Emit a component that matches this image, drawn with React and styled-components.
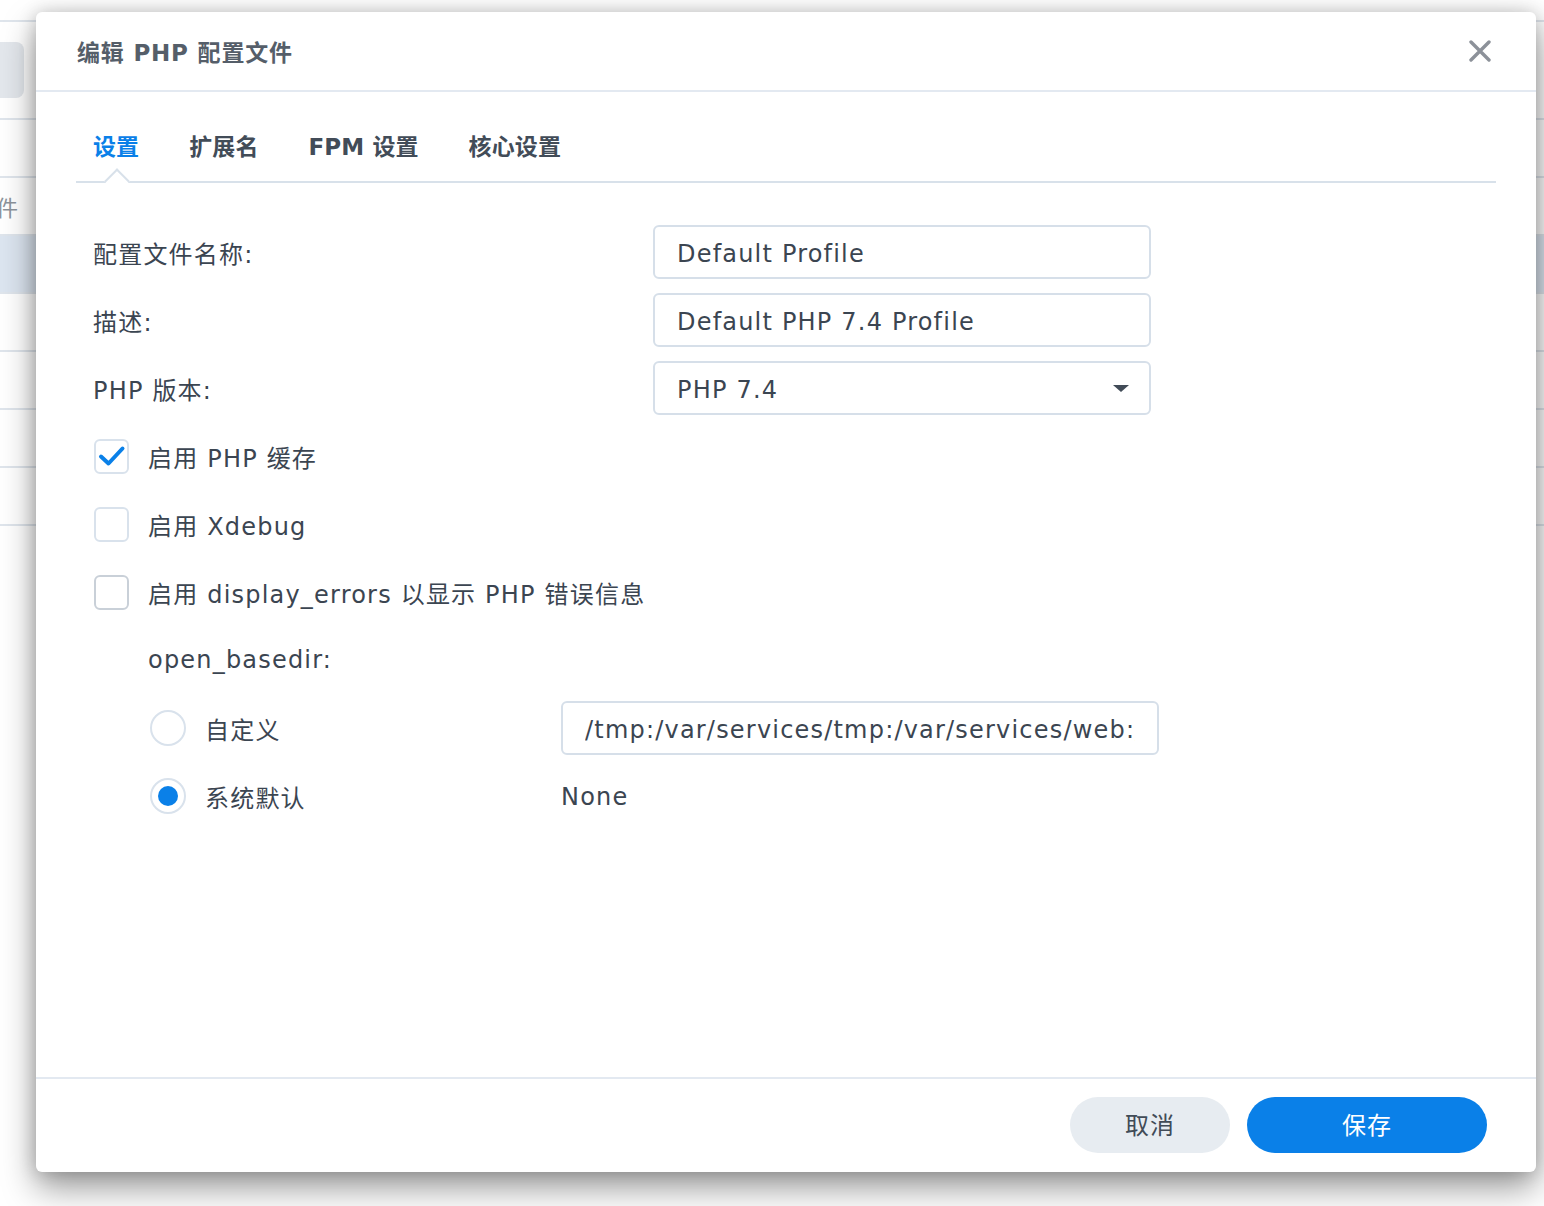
import React from "react";
import styled, { createGlobalStyle } from "styled-components";

const FONT = `"DejaVu Sans", "Noto Sans CJK SC", sans-serif`;

const GlobalStyle = createGlobalStyle`
  html, body {
    margin: 0;
    padding: 0;
    background: #ffffff;
  }
  body {
    font-family: ${FONT};
    color: #3b4551;
  }
`;

function App() {
  return (
    <Screen>
      <GlobalStyle />
      <Backdrop>
        <BackRow $h={22} />
        <BackRow $h={98}>
          <BackChip />
        </BackRow>
        <BackRow $h={58} />
        <BackRow $h={58}>
          <BackLabel>件</BackLabel>
        </BackRow>
        <BackRow $h={58} $active />
        <BackRow $h={58} />
        <BackRow $h={58} />
        <BackRow $h={58} />
        <BackRow $h={58} />
      </Backdrop>

      <Dialog>
        <Header>
          <Title>编辑 PHP 配置文件</Title>
          <Close>
            <svg width="22" height="22" viewBox="0 0 22 22">
              <path d="M2 2 L20 20 M20 2 L2 20" stroke="#8c9199" strokeWidth="3.4" strokeLinecap="round" />
            </svg>
          </Close>
        </Header>

        <Body>
          <TabBar>
            <Tab $active>设置<Notch /></Tab>
            <Tab>扩展名</Tab>
            <Tab>FPM 设置</Tab>
            <Tab>核心设置</Tab>
          </TabBar>

          <Form>
            <Row>
              <Label>配置文件名称:</Label>
              <Field>Default Profile</Field>
            </Row>
            <Row>
              <Label>描述:</Label>
              <Field>Default PHP 7.4 Profile</Field>
            </Row>
            <Row>
              <Label>PHP 版本:</Label>
              <Field>
                PHP 7.4
                <Caret />
              </Field>
            </Row>
            <Row>
              <Box $checked>
                <svg width="28" height="24" viewBox="0 0 28 24">
                  <path d="M3 12.5 L10.5 19.5 L24.5 4.5" fill="none" stroke="#0a80e8" strokeWidth="4" strokeLinecap="round" strokeLinejoin="round" />
                </svg>
              </Box>
              <OptionText>启用 PHP 缓存</OptionText>
            </Row>
            <Row>
              <Box />
              <OptionText>启用 Xdebug</OptionText>
            </Row>
            <Row>
              <Box $dark />
              <OptionText>启用 display_errors 以显示 PHP 错误信息</OptionText>
            </Row>
            <Row $indent={55}>
              <OptionText>open_basedir:</OptionText>
            </Row>
            <Row $indent={57}>
              <RadioCell>
                <Radio />
                <OptionText>自定义</OptionText>
              </RadioCell>
              <PathField>
                <Clip>/tmp:/var/services/tmp:/var/services/web:/var/services/homes</Clip>
              </PathField>
            </Row>
            <Row $indent={57}>
              <RadioCell>
                <Radio $checked />
                <OptionText>系统默认</OptionText>
              </RadioCell>
              <Value>None</Value>
            </Row>
          </Form>
        </Body>

        <Footer>
          <Button>取消</Button>
          <Button $primary>保存</Button>
        </Footer>
      </Dialog>
    </Screen>
  );
}

const Screen = styled.div`
  position: relative;
  width: 1544px;
  height: 1206px;
  overflow: hidden;
  background: #ffffff;
`;

const Backdrop = styled.div`
  display: flex;
  flex-direction: column;
  width: 100%;
`;

const BackRow = styled.div`
  height: ${(p) => p.$h}px;
  border-bottom: 2px solid #dfe5ec;
  background: ${(p) => (p.$active ? "#dce5f0" : "transparent")};
  display: flex;
  align-items: center;
  box-sizing: border-box;
`;

const BackChip = styled.div`
  width: 24px;
  height: 56px;
  border-radius: 0 8px 8px 0;
  background: #e3e7ec;
`;

const BackLabel = styled.span`
  font-size: 22px;
  color: #8c939b;
  margin-left: -4px;
`;

const Dialog = styled.div`
  position: absolute;
  left: 36px;
  top: 12px;
  width: 1500px;
  height: 1160px;
  background: #ffffff;
  border-radius: 6px;
  box-shadow: 0 16px 34px rgba(0, 0, 0, 0.4), 0 0 18px rgba(0, 0, 0, 0.18);
  display: flex;
  flex-direction: column;
`;

const Header = styled.div`
  height: 78px;
  border-bottom: 2px solid #e3e9f1;
  display: flex;
  align-items: center;
  justify-content: space-between;
  padding: 0 45px 0 41px;
`;

const Title = styled.h1`
  margin: 0;
  font-size: 23px;
  font-weight: 700;
  letter-spacing: 0.8px;
  color: #555e69;
`;

const Close = styled.div`
  display: flex;
  align-items: center;
`;

const Body = styled.div`
  flex: 1;
  padding: 0 40px;
`;

const TabBar = styled.div`
  height: 91px;
  border-bottom: 2px solid #d8e1ea;
  box-sizing: border-box;
  display: flex;
  align-items: flex-end;
  gap: 50px;
  padding-left: 17px;
`;

const Tab = styled.div`
  position: relative;
  font-size: 23px;
  font-weight: 700;
  letter-spacing: 0.1px;
  line-height: 34px;
  padding-bottom: 17px;
  color: ${(p) => (p.$active ? "#0a80e8" : "#424c58")};
`;

const Notch = styled.span`
  position: absolute;
  left: 50%;
  bottom: -9px;
  width: 16px;
  height: 16px;
  margin-left: -8px;
  background: #ffffff;
  border-top: 2px solid #d8e1ea;
  border-left: 2px solid #d8e1ea;
  transform: rotate(45deg);
`;

const Form = styled.div`
  display: flex;
  flex-direction: column;
  gap: 14px;
  padding: 42px 0 0 17px;
  font-size: 24px;
  letter-spacing: 1.2px;
`;

const Row = styled.div`
  height: 54px;
  display: flex;
  align-items: center;
  padding-left: ${(p) => p.$indent || 0}px;
`;

const Label = styled.div`
  width: 560px;
  color: #3b4551;
`;

const Field = styled.div`
  position: relative;
  width: 498px;
  height: 54px;
  box-sizing: border-box;
  border: 2px solid #d6dfe9;
  border-radius: 6px;
  display: flex;
  align-items: center;
  padding: 3px 22px 0;
  color: #3b4551;
`;

const Caret = styled.span`
  position: absolute;
  right: 20px;
  top: 50%;
  margin-top: -3px;
  width: 0;
  height: 0;
  border-left: 8px solid transparent;
  border-right: 8px solid transparent;
  border-top: 7px solid #414b57;
`;

const Box = styled.div`
  width: 35px;
  height: 35px;
  box-sizing: border-box;
  border: 2px solid ${(p) => (p.$dark ? "#c9d0d8" : "#d9e2ec")};
  border-radius: 6px;
  display: flex;
  align-items: center;
  justify-content: center;
  margin: 0 19px 0 1px;
`;

const OptionText = styled.span`
  color: #3b4551;
`;

const RadioCell = styled.div`
  width: 411px;
  display: flex;
  align-items: center;
  gap: 19px;
`;

const Radio = styled.span`
  width: 36px;
  height: 36px;
  box-sizing: border-box;
  border-radius: 50%;
  border: 2px solid #d9e2ec;
  display: flex;
  align-items: center;
  justify-content: center;
  &::after {
    content: "";
    width: 20px;
    height: 20px;
    border-radius: 50%;
    background: ${(p) => (p.$checked ? "#0a80e8" : "transparent")};
  }
`;

const PathField = styled(Field)`
  width: 598px;
`;

const Clip = styled.span`
  flex: 1;
  white-space: nowrap;
  overflow: hidden;
`;

const Value = styled.span`
  color: #3b4551;
  padding-top: 2px;
`;

const Footer = styled.div`
  height: 95px;
  box-sizing: border-box;
  border-top: 2px solid #e3e9f1;
  display: flex;
  align-items: flex-start;
  justify-content: flex-end;
  gap: 17px;
  padding: 18px 49px 0 0;
`;

const Button = styled.button`
  height: 56px;
  width: ${(p) => (p.$primary ? 240 : 160)}px;
  border: none;
  border-radius: 28px;
  font-family: ${FONT};
  font-size: 24px;
  letter-spacing: 1px;
  padding: 0 0 3px;
  background: ${(p) => (p.$primary ? "#0a80e8" : "#e7ecf1")};
  color: ${(p) => (p.$primary ? "#ffffff" : "#414b57")};
`;

export default App;
